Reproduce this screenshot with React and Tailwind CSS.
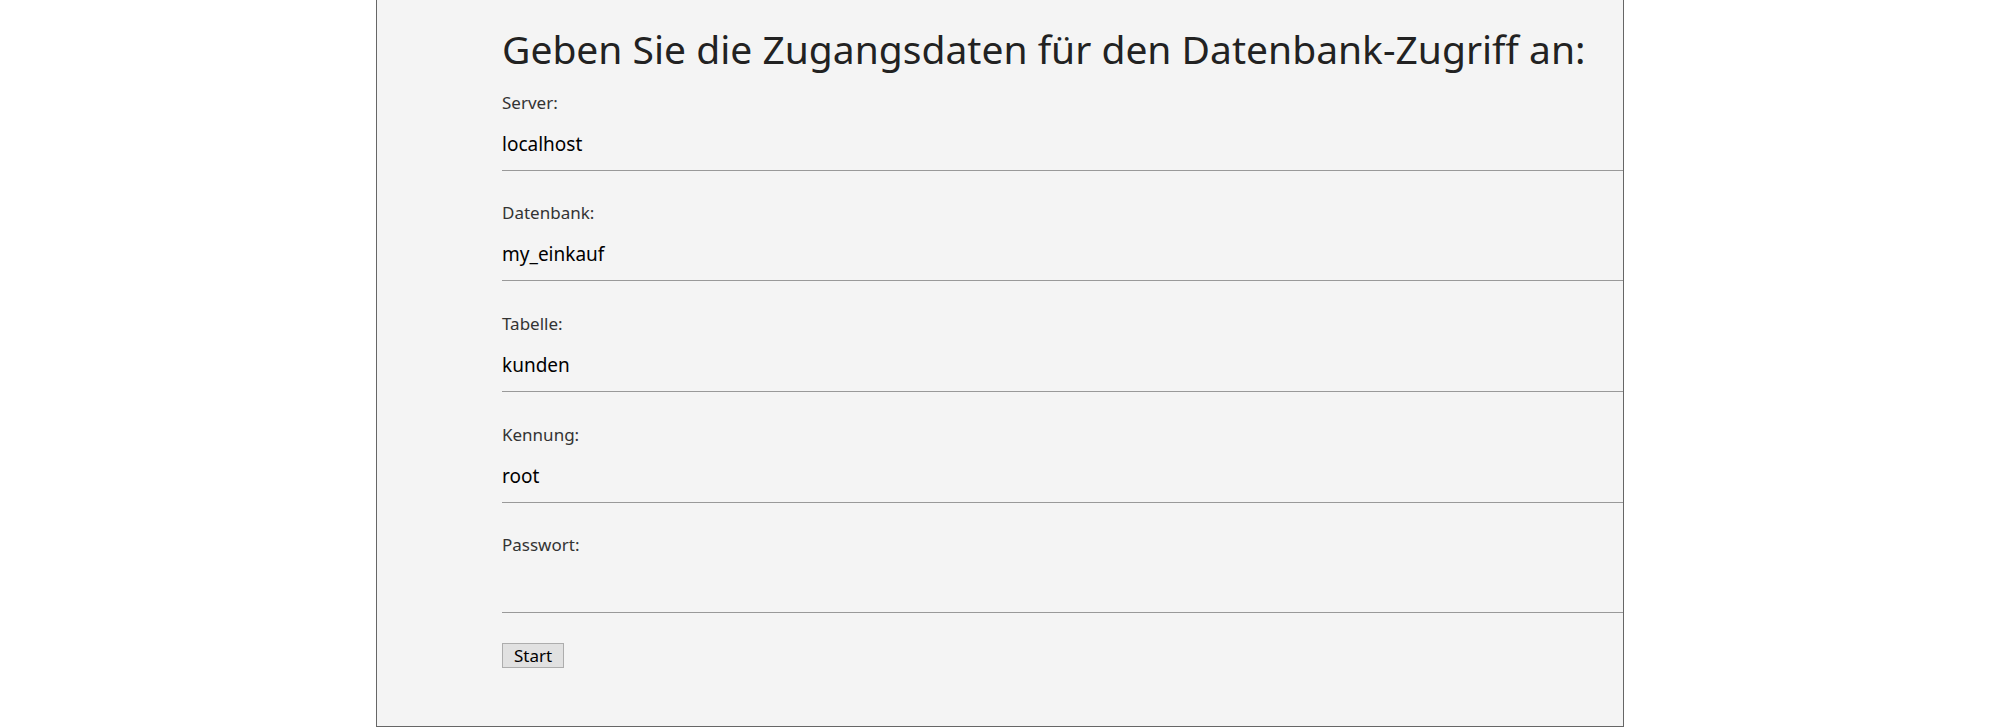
const fields = [
  { label: 'Server:', value: 'localhost' },
  { label: 'Datenbank:', value: 'my_einkauf' },
  { label: 'Tabelle:', value: 'kunden', extra: true },
  { label: 'Kennung:', value: 'root', extra: true },
  { label: 'Passwort:', value: '' },
]

function Field({ label, value, first, extra }) {
  return (
    <div className={first ? 'pt-[18px]' : extra ? 'pt-[31px]' : 'pt-[30px]'}>
      <label className="block text-[17px] leading-[24px] text-[#333]">{label}</label>
      <div className="mt-[14px] h-[42px] pb-[12px] border-b border-[#999] text-[19px] leading-[30px] text-black">
        {value}
      </div>
    </div>
  )
}

export default function App() {
  return (
    <div className="min-h-[727px] bg-white font-['Noto_Sans',sans-serif]">
      <div className="mx-auto w-[1248px] h-[727px] bg-[#f4f4f4] border-x border-b border-[#666] pl-[125px]">
        <h1 className="pt-[25px] text-[39px] leading-[48px] text-[#222]">
          Geben Sie die Zugangsdaten für den Datenbank-Zugriff an:
        </h1>
        {fields.map((f, i) => (
          <Field key={f.label} label={f.label} value={f.value} first={i === 0} extra={f.extra} />
        ))}
        <button className="mt-[30px] w-[62px] h-[25px] bg-[#e1e1e1] border border-[#adadad] text-[17px] leading-[22px] text-black">
          Start
        </button>
      </div>
    </div>
  )
}
